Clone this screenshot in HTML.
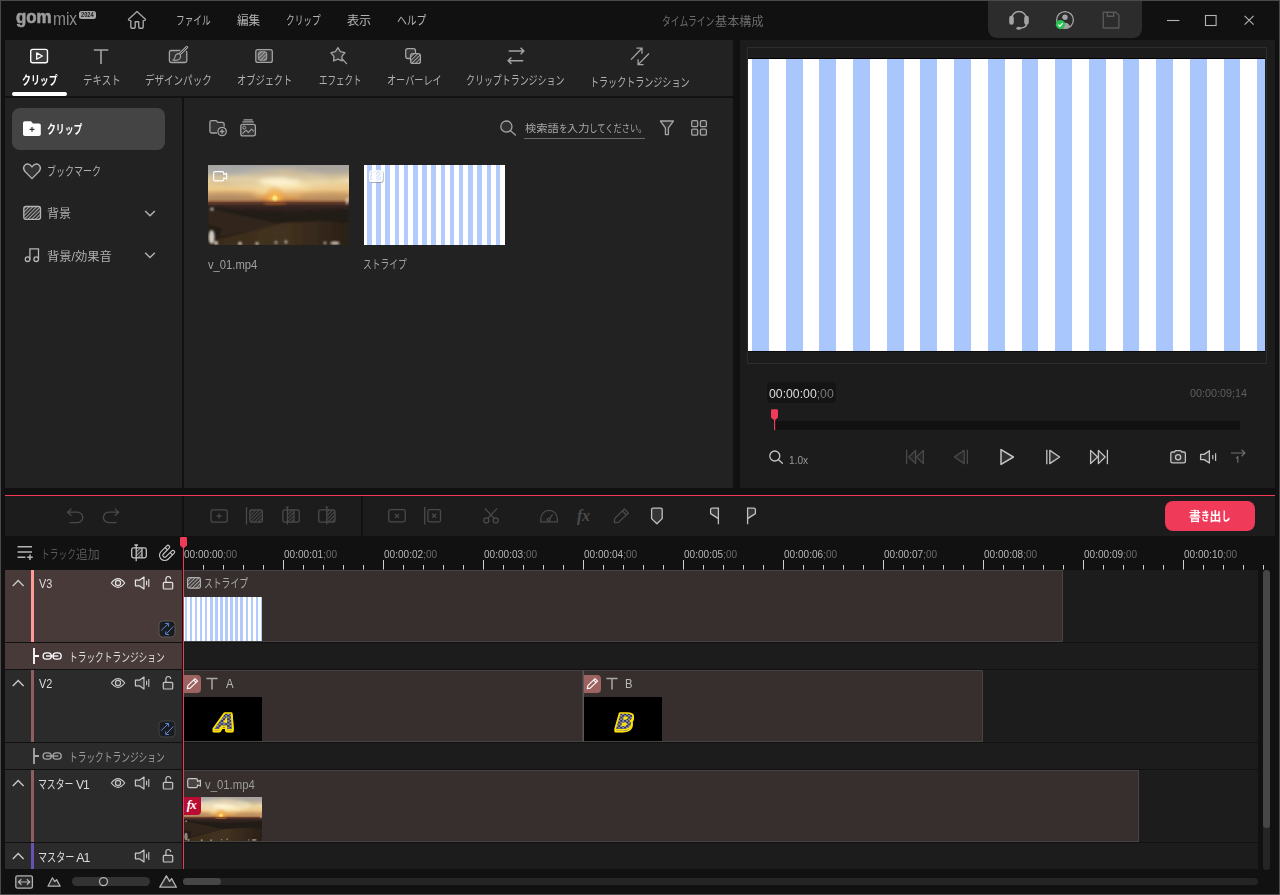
<!DOCTYPE html>
<html lang="ja"><head><meta charset="utf-8"><title>GOM Mix - タイムライン基本構成</title>
<style>html,body{margin:0;padding:0;background:#111111;}
body{width:1280px;height:895px;position:relative;overflow:hidden;font-family:"Liberation Sans","Noto Sans CJK JP",sans-serif;-webkit-font-smoothing:antialiased;}
#app{position:absolute;left:0;top:0;width:1280px;height:895px;box-sizing:border-box;border:1px solid #4a4a4a;background:#111111;overflow:hidden;}
#app>div,#app>span{position:absolute;}
#w{position:absolute;left:-1px;top:-1px;width:1280px;height:895px;}
#w>div,#w>span,#w>svg{position:absolute;}
.t{white-space:nowrap;transform-origin:0 50%;display:block;}
.k{display:inline-block;transform:scaleX(.73);transform-origin:0 50%;white-space:nowrap;}
</style></head><body><div id="app"><div id="w">
<div style="left:5px;top:40px;width:728px;height:56px;background:#222222;"></div>
<div style="left:5px;top:98px;width:177px;height:390px;background:#222222;"></div>
<div style="left:184px;top:98px;width:549px;height:390px;background:#222222;"></div>
<div style="left:740px;top:40px;width:535px;height:448px;background:#1c1c1c;"></div>
<div style="left:988px;top:1px;width:154px;height:37px;background:#2c2c2c;border-radius:0 0 9px 9px;"></div>
<div style="left:12px;top:92px;width:55px;height:4px;background:#ffffff;border-radius:2px;"></div>
<div style="left:12px;top:108px;width:153px;height:42px;background:#444444;border-radius:8px;"></div>
<div style="left:524px;top:138px;width:121px;height:1px;background:#6a6a6a;"></div>
<div style="left:747px;top:47px;width:520px;height:317px;background:transparent;border:1px solid #2d2d2d;box-sizing:border-box;"></div>
<div style="left:748px;top:58px;width:517px;height:1px;background:#000;"></div>
<div style="left:748px;top:351px;width:517px;height:1px;background:#0c0c0c;"></div>
<div style="left:748px;top:59px;width:517px;height:292px;background:#fff repeating-linear-gradient(90deg,#fff 0,#fff 4.1px,#a9c6fd 4.1px,#a9c6fd 20.95px,#fff 20.95px,#fff 33.68px);"></div>
<div style="left:767px;top:382px;width:69px;height:21px;background:#141414;border-radius:4px;"></div>
<div style="left:775px;top:421px;width:465px;height:9px;background:#111111;"></div>
<div style="left:5px;top:495px;width:1270px;height:1px;background:#f03a5a;"></div>
<div style="left:5px;top:496px;width:177px;height:40px;background:#1c1c1c;"></div>
<div style="left:184px;top:496px;width:177px;height:40px;background:#1c1c1c;"></div>
<div style="left:363px;top:496px;width:912px;height:40px;background:#1c1c1c;"></div>
<div style="left:1165px;top:501px;width:90px;height:30px;background:#f03a5a;border-radius:8px;"></div>
<div style="left:5px;top:570px;width:177px;height:72px;background:#483a39;"></div>
<div style="left:184px;top:570px;width:1074px;height:72px;background:#1c1c1c;"></div>
<div style="left:31px;top:570px;width:3px;height:72px;background:#ff9a96;"></div>
<div style="left:5px;top:643px;width:177px;height:26px;background:#483a39;"></div>
<div style="left:184px;top:643px;width:1074px;height:26px;background:#1c1c1c;"></div>
<div style="left:5px;top:670px;width:177px;height:72px;background:#2b2b2b;"></div>
<div style="left:184px;top:670px;width:1074px;height:72px;background:#1c1c1c;"></div>
<div style="left:31px;top:670px;width:3px;height:72px;background:#8e5f5d;"></div>
<div style="left:5px;top:743px;width:177px;height:26px;background:#2b2b2b;"></div>
<div style="left:184px;top:743px;width:1074px;height:26px;background:#1c1c1c;"></div>
<div style="left:5px;top:770px;width:177px;height:72px;background:#2b2b2b;"></div>
<div style="left:184px;top:770px;width:1074px;height:72px;background:#1c1c1c;"></div>
<div style="left:31px;top:770px;width:3px;height:72px;background:#8e5f5d;"></div>
<div style="left:5px;top:843px;width:177px;height:26px;background:#2b2b2b;"></div>
<div style="left:184px;top:843px;width:1074px;height:26px;background:#1c1c1c;"></div>
<div style="left:31px;top:843px;width:3px;height:26px;background:#6a52b5;"></div>
<div style="left:184px;top:570px;width:879px;height:72px;background:#372f2e;box-sizing:border-box;border:1px solid #464343;border-left:none;"></div>
<div style="left:184px;top:670px;width:399px;height:72px;background:#372f2e;box-sizing:border-box;border:1px solid #464343;border-left:none;"></div>
<div style="left:584px;top:670px;width:399px;height:72px;background:#372f2e;box-sizing:border-box;border:1px solid #464343;border-left:none;"></div>
<div style="left:184px;top:770px;width:955px;height:72px;background:#372f2e;box-sizing:border-box;border:1px solid #464343;border-left:none;"></div>
<div style="left:583px;top:670px;width:1px;height:72px;background:#5a5555;"></div>
<div style="left:1263px;top:570px;width:7px;height:300px;background:#252525;border-radius:4px;"></div>
<div style="left:1263px;top:570px;width:7px;height:258px;background:#464646;border-radius:4px;"></div>
<div style="left:183px;top:878px;width:1075px;height:7px;background:#252525;border-radius:4px;"></div>
<div style="left:183px;top:878px;width:38px;height:7px;background:#464646;border-radius:4px;"></div>
<div style="left:72px;top:877px;width:78px;height:9px;background:#333333;border-radius:5px;"></div>
<div style="left:364px;top:165px;width:141px;height:80px;background:#fff repeating-linear-gradient(90deg,#fff 0,#fff 3.1px,#b3cbfc 3.1px,#b3cbfc 7.6px,#fff 7.6px,#fff 9.19px);"></div>
<div style="left:184px;top:597px;width:78px;height:44px;background:#fff repeating-linear-gradient(90deg,#fff 0,#fff 0.6px,#b3cbfc 0.6px,#b3cbfc 3.1px,#fff 3.1px,#fff 5.08px);"></div>
<div style="left:184px;top:697px;width:78px;height:44px;background:#000;"></div>
<div style="left:584px;top:697px;width:78px;height:44px;background:#000;"></div>
<div style="left:184px;top:675px;width:17px;height:18px;background:#9c6360;border-radius:0 4px 4px 0;"></div>
<div style="left:584px;top:675px;width:17px;height:18px;background:#9c6360;border-radius:0 4px 4px 0;"></div>
<svg style="position:absolute;left:208px;top:165px" width="141" height="80" viewBox="0 0 141 80" preserveAspectRatio="none">
<defs>
<linearGradient id="s1sky" x1="0" y1="0" x2="0" y2="1">
<stop offset="0" stop-color="#a4a09c"/><stop offset=".2" stop-color="#c6b89c"/><stop offset=".42" stop-color="#ead6a4"/><stop offset=".64" stop-color="#ecc888"/><stop offset=".84" stop-color="#dca25e"/><stop offset="1" stop-color="#ac7040"/></linearGradient>
<radialGradient id="s1sun" cx=".5" cy=".5" r=".5"><stop offset="0" stop-color="#ffe890"/><stop offset=".25" stop-color="#f8b848" stop-opacity=".95"/><stop offset=".6" stop-color="#f0a040" stop-opacity=".5"/><stop offset="1" stop-color="#e89038" stop-opacity="0"/></radialGradient>
<linearGradient id="s1gr" x1="0" y1="0" x2="0" y2="1">
<stop offset="0" stop-color="#583828"/><stop offset=".1" stop-color="#362521"/><stop offset=".3" stop-color="#241c19"/><stop offset=".6" stop-color="#2c2118"/><stop offset="1" stop-color="#281d13"/></linearGradient>
<linearGradient id="s1dn" x1="0" y1="0" x2="1" y2="0"><stop offset="0" stop-color="#3a2c1e"/><stop offset=".5" stop-color="#433220"/><stop offset="1" stop-color="#2a2017"/></linearGradient>
<filter id="s1b" x="-10%" y="-10%" width="120%" height="120%"><feGaussianBlur stdDeviation="1.3"/></filter>
<filter id="s1b2" x="-20%" y="-20%" width="140%" height="140%"><feGaussianBlur stdDeviation="2.6"/></filter>
<filter id="s1b3" x="-30%" y="-30%" width="160%" height="160%"><feGaussianBlur stdDeviation=".7"/></filter>
<clipPath id="s1c"><rect width="141" height="80"/></clipPath>
</defs>
<g clip-path="url(#s1c)">
<rect width="141" height="38" fill="url(#s1sky)"/>
<g filter="url(#s1b2)">
<ellipse cx="28" cy="5" rx="42" ry="5" fill="#a4a6aa" opacity=".8"/>
<ellipse cx="118" cy="4" rx="34" ry="5" fill="#a8a49c" opacity=".8"/>
<ellipse cx="70" cy="9" rx="30" ry="3" fill="#c6b08a" opacity=".8"/>
<ellipse cx="72" cy="16.5" rx="20" ry="3.4" fill="#fff6d4"/>
<ellipse cx="84" cy="21" rx="18" ry="2.2" fill="#fbe8b0" opacity=".9"/>
<ellipse cx="62" cy="26" rx="16" ry="2.2" fill="#f8e0a0" opacity=".9"/>
<ellipse cx="105" cy="13" rx="28" ry="2.6" fill="#ccb68e" opacity=".7"/>
<ellipse cx="25" cy="17" rx="28" ry="3" fill="#cdb48a" opacity=".7"/>
<ellipse cx="18" cy="33" rx="32" ry="5" fill="#a88868" opacity=".75"/>
<ellipse cx="122" cy="33" rx="32" ry="5" fill="#b08c64" opacity=".7"/>
</g>
<ellipse cx="70" cy="15" rx="52" ry="11" fill="#fff4d8" opacity="0.15" filter="url(#s1b2)"/>
<circle cx="67" cy="33.5" r="13" fill="url(#s1sun)"/>
<ellipse cx="66.8" cy="33.6" rx="2.1" ry="3.2" fill="#ffe680" filter="url(#s1b3)"/>
<rect y="37" width="141" height="43" fill="url(#s1gr)"/>
<g filter="url(#s1b)">
<rect y="36" width="141" height="2.4" fill="#6e402a" opacity=".8"/>
<ellipse cx="67" cy="38.4" rx="12" ry="1.4" fill="#b86428" opacity=".7"/>
<path d="M0 41 L30 45 L80 48 L141 44 V58 L0 58Z" fill="#241b19"/>
<path d="M0 43 L30 50 L72 59 L12 71 L0 69Z" fill="#33271c"/>
<path d="M8 75 L75 58 L112 56 L141 58 V82 H8Z" fill="url(#s1dn)"/>
<path d="M0 60 L14 63 L10 74 L0 72Z" fill="#241a14"/>
</g>
<g fill="#f0ebe2" filter="url(#s1b)" opacity="0.85">
<ellipse cx="3.6" cy="72" rx="3" ry="7"/><circle cx="8" cy="78" r="2"/><circle cx="32" cy="78.5" r="1.8"/><circle cx="49" cy="78.5" r="1.6"/><circle cx="68" cy="77.5" r="1.3"/><circle cx="78" cy="77" r="1.4"/><ellipse cx="127" cy="78" rx="4.5" ry="1.6"/><circle cx="117" cy="78" r="1.3"/><circle cx="4" cy="44" r="1.6"/><ellipse cx="139" cy="36" rx="1" ry="3.5"/><circle cx="139" cy="15" r="1.2"/>
</g>
</g></svg>
<svg style="position:absolute;left:184px;top:797px" width="78" height="44" viewBox="0 0 141 80" preserveAspectRatio="none">
<defs>
<linearGradient id="s2sky" x1="0" y1="0" x2="0" y2="1">
<stop offset="0" stop-color="#a4a09c"/><stop offset=".2" stop-color="#c6b89c"/><stop offset=".42" stop-color="#ead6a4"/><stop offset=".64" stop-color="#ecc888"/><stop offset=".84" stop-color="#dca25e"/><stop offset="1" stop-color="#ac7040"/></linearGradient>
<radialGradient id="s2sun" cx=".5" cy=".5" r=".5"><stop offset="0" stop-color="#ffe890"/><stop offset=".25" stop-color="#f8b848" stop-opacity=".95"/><stop offset=".6" stop-color="#f0a040" stop-opacity=".5"/><stop offset="1" stop-color="#e89038" stop-opacity="0"/></radialGradient>
<linearGradient id="s2gr" x1="0" y1="0" x2="0" y2="1">
<stop offset="0" stop-color="#583828"/><stop offset=".1" stop-color="#362521"/><stop offset=".3" stop-color="#241c19"/><stop offset=".6" stop-color="#2c2118"/><stop offset="1" stop-color="#281d13"/></linearGradient>
<linearGradient id="s2dn" x1="0" y1="0" x2="1" y2="0"><stop offset="0" stop-color="#3a2c1e"/><stop offset=".5" stop-color="#433220"/><stop offset="1" stop-color="#2a2017"/></linearGradient>
<filter id="s2b" x="-10%" y="-10%" width="120%" height="120%"><feGaussianBlur stdDeviation="1.3"/></filter>
<filter id="s2b2" x="-20%" y="-20%" width="140%" height="140%"><feGaussianBlur stdDeviation="2.6"/></filter>
<filter id="s2b3" x="-30%" y="-30%" width="160%" height="160%"><feGaussianBlur stdDeviation=".7"/></filter>
<clipPath id="s2c"><rect width="141" height="80"/></clipPath>
</defs>
<g clip-path="url(#s2c)">
<rect width="141" height="38" fill="url(#s2sky)"/>
<g filter="url(#s2b2)">
<ellipse cx="28" cy="5" rx="42" ry="5" fill="#a4a6aa" opacity=".8"/>
<ellipse cx="118" cy="4" rx="34" ry="5" fill="#a8a49c" opacity=".8"/>
<ellipse cx="70" cy="9" rx="30" ry="3" fill="#c6b08a" opacity=".8"/>
<ellipse cx="72" cy="16.5" rx="20" ry="3.4" fill="#fff6d4"/>
<ellipse cx="84" cy="21" rx="18" ry="2.2" fill="#fbe8b0" opacity=".9"/>
<ellipse cx="62" cy="26" rx="16" ry="2.2" fill="#f8e0a0" opacity=".9"/>
<ellipse cx="105" cy="13" rx="28" ry="2.6" fill="#ccb68e" opacity=".7"/>
<ellipse cx="25" cy="17" rx="28" ry="3" fill="#cdb48a" opacity=".7"/>
<ellipse cx="18" cy="33" rx="32" ry="5" fill="#a88868" opacity=".75"/>
<ellipse cx="122" cy="33" rx="32" ry="5" fill="#b08c64" opacity=".7"/>
</g>
<ellipse cx="70" cy="15" rx="52" ry="11" fill="#fff4d8" opacity="0.45" filter="url(#s2b2)"/>
<circle cx="67" cy="33.5" r="13" fill="url(#s2sun)"/>
<ellipse cx="66.8" cy="33.6" rx="2.1" ry="3.2" fill="#ffe680" filter="url(#s2b3)"/>
<rect y="37" width="141" height="43" fill="url(#s2gr)"/>
<g filter="url(#s2b)">
<rect y="36" width="141" height="2.4" fill="#6e402a" opacity=".8"/>
<ellipse cx="67" cy="38.4" rx="12" ry="1.4" fill="#b86428" opacity=".7"/>
<path d="M0 41 L30 45 L80 48 L141 44 V58 L0 58Z" fill="#241b19"/>
<path d="M0 43 L30 50 L72 59 L12 71 L0 69Z" fill="#33271c"/>
<path d="M8 75 L75 58 L112 56 L141 58 V82 H8Z" fill="url(#s2dn)"/>
<path d="M0 60 L14 63 L10 74 L0 72Z" fill="#241a14"/>
</g>
<g fill="#f0ebe2" filter="url(#s2b)" opacity="0.5">
<ellipse cx="3.6" cy="72" rx="3" ry="7"/><circle cx="8" cy="78" r="2"/><circle cx="32" cy="78.5" r="1.8"/><circle cx="49" cy="78.5" r="1.6"/><circle cx="68" cy="77.5" r="1.3"/><circle cx="78" cy="77" r="1.4"/><ellipse cx="127" cy="78" rx="4.5" ry="1.6"/><circle cx="117" cy="78" r="1.3"/><circle cx="4" cy="44" r="1.6"/><ellipse cx="139" cy="36" rx="1" ry="3.5"/><circle cx="139" cy="15" r="1.2"/>
</g>
</g></svg>
<div style="left:184px;top:797px;width:17px;height:18px;background:#b80c32;border-radius:0 0 4px 0;"></div>
<span class="t" style="left:186.8px;top:796px;font-size:13px;line-height:18px;color:#fff;font-family:'Liberation Serif',serif;font-style:italic;font-weight:700;letter-spacing:-.8px;">fx</span>
<span id="gom" class="t" style="left:16.00px;top:4.70px;font-size:19px;line-height:24px;color:#9c9c9c;font-weight:700;transform:scaleX(0.8876);-webkit-text-stroke:.7px #9c9c9c;">gom</span>
<span id="mix" class="t" style="left:53.00px;top:6.60px;font-size:19px;line-height:24px;color:#8c8c8c;transform:scaleX(0.8154);">mix</span>
<div style="left:79px;top:11px;width:17px;height:8px;background:#a4a4a4;border-radius:2.5px;"></div>
<span id="y2024" class="t" style="left:81.00px;top:10.40px;font-size:7px;line-height:10px;color:#1a1a1a;font-weight:700;transform:scaleX(0.8125);">2024</span>
<span id="m1" class="t" style="left:176.00px;top:12.20px;font-size:12px;line-height:18px;color:#b4b4b4;transform:scaleX(0.7239);">ファイル</span>
<span id="m2" class="t" style="left:237.20px;top:12.20px;font-size:12px;line-height:18px;color:#b4b4b4;transform:scaleX(0.9674);">編集</span>
<span id="m3" class="t" style="left:286.00px;top:12.20px;font-size:12px;line-height:18px;color:#b4b4b4;transform:scaleX(0.7239);">クリップ</span>
<span id="m4" class="t" style="left:347.40px;top:12.20px;font-size:12px;line-height:18px;color:#b4b4b4;transform:scaleX(1.0094);">表示</span>
<span id="m5" class="t" style="left:396.80px;top:12.20px;font-size:12px;line-height:18px;color:#b4b4b4;transform:scaleX(0.8177);">ヘルプ</span>
<span id="title" class="t" style="left:661.75px;top:12.55px;font-size:12px;line-height:18px;color:#6c6c6c;transform:scaleX(1.0101);"><span class="k" style="width:52.56px">タイムライン</span>基本構成</span>
<span id="t1" class="t" style="left:21.50px;top:72.40px;font-size:12px;line-height:18px;color:#ffffff;font-weight:700;transform:scaleX(0.7402);">クリップ</span>
<span id="t2" class="t" style="left:83.00px;top:72.40px;font-size:12px;line-height:18px;color:#b0b0b0;transform:scaleX(0.7895);">テキスト</span>
<span id="t3" class="t" style="left:144.75px;top:72.40px;font-size:12px;line-height:18px;color:#b0b0b0;transform:scaleX(0.7940);">デザインパック</span>
<span id="t4" class="t" style="left:237.00px;top:72.40px;font-size:12px;line-height:18px;color:#b0b0b0;transform:scaleX(0.7681);">オブジェクト</span>
<span id="t5" class="t" style="left:318.50px;top:72.40px;font-size:12px;line-height:18px;color:#b0b0b0;transform:scaleX(0.7072);">エフェクト</span>
<span id="t6" class="t" style="left:386.50px;top:72.40px;font-size:12px;line-height:18px;color:#b0b0b0;transform:scaleX(0.7599);">オーバーレイ</span>
<span id="t7" class="t" style="left:465.75px;top:72.40px;font-size:12px;line-height:18px;color:#b0b0b0;transform:scaleX(0.7454);">クリップトランジション</span>
<span id="t8" class="t" style="left:589.50px;top:73.60px;font-size:12px;line-height:18px;color:#b0b0b0;transform:scaleX(0.7539);">トラックトランジション</span>
<span id="s1" class="t" style="left:47.25px;top:121.25px;font-size:12px;line-height:18px;color:#ffffff;font-weight:700;transform:scaleX(0.7346);">クリップ</span>
<span id="s2" class="t" style="left:46.75px;top:162.75px;font-size:12px;line-height:18px;color:#b0b0b0;transform:scaleX(0.7503);">ブックマーク</span>
<span id="s3" class="t" style="left:47.25px;top:205.25px;font-size:12px;line-height:18px;color:#b0b0b0;transform:scaleX(1.0015);">背景</span>
<span id="s4" class="t" style="left:47.25px;top:247.75px;font-size:12px;line-height:18px;color:#b0b0b0;transform:scaleX(1.0243);">背景/効果音</span>
<span id="search" class="t" style="left:525.25px;top:120.35px;font-size:10.5px;line-height:16px;color:#a8a8a8;transform:scaleX(1.0726);">検索語<span class="k" style="width:7.67px">を</span>入力<span class="k" style="width:53.66px">してください。</span></span>
<span id="f1" class="t" style="left:208.00px;top:256.25px;font-size:12px;line-height:18px;color:#a0a0a0;transform:scaleX(0.9360);">v_01.mp4</span>
<span id="f2" class="t" style="left:363.00px;top:256.38px;font-size:12px;line-height:18px;color:#a0a0a0;transform:scaleX(0.7288);">ストライプ</span>
<span id="tc1" class="t" style="left:769.00px;top:384.20px;font-size:13px;line-height:20px;color:#dddddd;transform:scaleX(0.9427);">00:00:00<span style="color:#7a7a7a">;00</span></span>
<span id="tc2" class="t" style="left:1189.70px;top:385.40px;font-size:11px;line-height:16px;color:#5e5e5e;transform:scaleX(0.9794);">00:00:09;14</span>
<span id="zoomx" class="t" style="left:788.60px;top:451.60px;font-size:11px;line-height:16px;color:#9a9a9a;transform:scaleX(0.9216);">1.0x</span>
<span id="addtrack" class="t" style="left:41.25px;top:545.50px;font-size:12px;line-height:18px;color:#585858;transform:scaleX(0.9948);"><span class="k" style="width:35.04px">トラック</span>追加</span>
<span id="r0" class="t" style="left:184.00px;top:546.40px;font-size:11px;line-height:16px;color:#b8b8b8;transform:scaleX(0.9138);">00:00:00<span style="color:#6a6a6a">;00</span></span>
<span id="r1" class="t" style="left:284.00px;top:546.40px;font-size:11px;line-height:16px;color:#b8b8b8;transform:scaleX(0.9138);">00:00:01<span style="color:#6a6a6a">;00</span></span>
<span id="r2" class="t" style="left:384.00px;top:546.40px;font-size:11px;line-height:16px;color:#b8b8b8;transform:scaleX(0.9138);">00:00:02<span style="color:#6a6a6a">;00</span></span>
<span id="r3" class="t" style="left:484.00px;top:546.40px;font-size:11px;line-height:16px;color:#b8b8b8;transform:scaleX(0.9138);">00:00:03<span style="color:#6a6a6a">;00</span></span>
<span id="r4" class="t" style="left:584.00px;top:546.40px;font-size:11px;line-height:16px;color:#b8b8b8;transform:scaleX(0.9138);">00:00:04<span style="color:#6a6a6a">;00</span></span>
<span id="r5" class="t" style="left:684.00px;top:546.40px;font-size:11px;line-height:16px;color:#b8b8b8;transform:scaleX(0.9138);">00:00:05<span style="color:#6a6a6a">;00</span></span>
<span id="r6" class="t" style="left:784.00px;top:546.40px;font-size:11px;line-height:16px;color:#b8b8b8;transform:scaleX(0.9138);">00:00:06<span style="color:#6a6a6a">;00</span></span>
<span id="r7" class="t" style="left:884.00px;top:546.40px;font-size:11px;line-height:16px;color:#b8b8b8;transform:scaleX(0.9138);">00:00:07<span style="color:#6a6a6a">;00</span></span>
<span id="r8" class="t" style="left:984.00px;top:546.40px;font-size:11px;line-height:16px;color:#b8b8b8;transform:scaleX(0.9138);">00:00:08<span style="color:#6a6a6a">;00</span></span>
<span id="r9" class="t" style="left:1084.00px;top:546.40px;font-size:11px;line-height:16px;color:#b8b8b8;transform:scaleX(0.9138);">00:00:09<span style="color:#6a6a6a">;00</span></span>
<span id="r10" class="t" style="left:1184.00px;top:546.40px;font-size:11px;line-height:16px;color:#b8b8b8;transform:scaleX(0.9138);">00:00:10<span style="color:#6a6a6a">;00</span></span>
<span id="export" class="t" style="left:1188.70px;top:508.00px;font-size:12px;line-height:18px;color:#ffffff;font-weight:700;transform:scaleX(0.9906);">書<span class="k" style="width:8.76px">き</span>出<span class="k" style="width:8.76px">し</span></span>
<span id="v3" class="t" style="left:38.75px;top:574.62px;font-size:12px;line-height:18px;color:#dcdcdc;transform:scaleX(0.9053);">V3</span>
<span id="c_stripe" class="t" style="left:203.75px;top:575.10px;font-size:12px;line-height:18px;color:#a8a8a8;transform:scaleX(0.7339);">ストライプ</span>
<span id="tt1" class="t" style="left:69.10px;top:648.85px;font-size:12px;line-height:18px;color:#dcdcdc;transform:scaleX(0.7252);">トラックトランジション</span>
<span id="v2" class="t" style="left:38.75px;top:674.62px;font-size:12px;line-height:18px;color:#dcdcdc;transform:scaleX(0.9053);">V2</span>
<span id="cA" class="t" style="left:226.00px;top:674.80px;font-size:12px;line-height:18px;color:#b8b8b8;transform:scaleX(0.9446);">A</span>
<span id="cB" class="t" style="left:624.75px;top:674.80px;font-size:12px;line-height:18px;color:#b8b8b8;transform:scaleX(0.9386);">B</span>
<span id="tt2" class="t" style="left:69.10px;top:748.85px;font-size:12px;line-height:18px;color:#9a9a9a;transform:scaleX(0.7252);">トラックトランジション</span>
<span id="v1" class="t" style="left:38.40px;top:775.90px;font-size:12px;line-height:18px;color:#dcdcdc;transform:scaleX(1.0121);"><span class="k" style="width:35.04px">マスター</span><span style="letter-spacing:-.9px"> V1</span></span>
<span id="c_v01" class="t" style="left:204.50px;top:776.20px;font-size:12px;line-height:18px;color:#9a9a9a;transform:scaleX(0.9436);">v_01.mp4</span>
<span id="a1" class="t" style="left:38.40px;top:848.90px;font-size:12px;line-height:18px;color:#dcdcdc;transform:scaleX(1.0365);"><span class="k" style="width:35.04px">マスター</span><span style="letter-spacing:-.9px"> A1</span></span>
<span class="t" style="left:577px;top:505.5px;font-size:16px;line-height:20px;color:#4a4a4a;font-family:'Liberation Serif',serif;font-style:italic;font-weight:700;letter-spacing:-.3px;">fx</span>
<div style="left:183px;top:546px;width:1.3px;height:323px;background:#f03a5a;z-index:5"></div>
<svg width="1280" height="895" viewBox="0 0 1280 895" style="left:0;top:0;pointer-events:none">
<defs><pattern id="hG" width="2.6" height="2.6" patternUnits="userSpaceOnUse" patternTransform="rotate(-45)"><rect width="2.6" height="1.1" fill="#a4a4a4"/></pattern><pattern id="hD" width="2.6" height="2.6" patternUnits="userSpaceOnUse" patternTransform="rotate(-45)"><rect width="2.6" height="1.1" fill="#4a4a4a"/></pattern><pattern id="hW" width="2.6" height="2.6" patternUnits="userSpaceOnUse" patternTransform="rotate(-45)"><rect width="2.6" height="1.1" fill="#ffffff"/></pattern><pattern id="chk" width="3.4" height="3.4" patternUnits="userSpaceOnUse"><rect width="3.4" height="3.4" fill="#8e94b8"/><rect width="1.7" height="1.7" fill="#2e3044"/><rect x="1.7" y="1.7" width="1.7" height="1.7" fill="#2e3044"/></pattern><filter id="ext" x="-20%" y="-20%" width="140%" height="150%"><feOffset dy="1.5" result="o"/><feMerge><feMergeNode in="o"/><feMergeNode in="SourceGraphic"/></feMerge></filter></defs>
<path d="M137 11.6 L128.6 19.2 Q128 20.6 130.8 20.6 L130.8 26.4 Q130.8 28.3 132.7 28.3 L133.4 28.3 Q135.2 28.3 135.2 26.4 L135.2 21.8 L138.7 21.8 L138.7 26.4 Q138.7 28.3 140.5 28.3 L141.3 28.3 Q143.2 28.3 143.2 26.4 L143.2 20.6 Q146 20.6 145.4 19.2 Z" fill="none" stroke="#a4a4a4" stroke-width="1.4" stroke-linejoin="round"/>
<g fill="none" stroke="#a4a4a4" stroke-width="1.5"><path d="M1011.5 19 A7.5 7.5 0 0 1 1026.5 19"/><path d="M1026.6 23.5 Q1026.6 27.6 1020.5 28.1"/></g>
<rect x="1009.2" y="15.8" width="4.6" height="9" rx="2.2" fill="#a4a4a4"/><rect x="1024.2" y="15.8" width="4.6" height="9" rx="2.2" fill="#a4a4a4"/><ellipse cx="1018.8" cy="28.2" rx="2.4" ry="1.5" fill="#a4a4a4"/>
<circle cx="1065" cy="20" r="8.4" fill="none" stroke="#a4a4a4" stroke-width="1.3"/><circle cx="1065" cy="17.2" r="2.7" fill="#a4a4a4"/><path d="M1060 26.8 A5.2 5.6 0 0 1 1070 26.8 A8.4 8.4 0 0 1 1060 26.8Z" fill="#a4a4a4"/>
<circle cx="1060.4" cy="24.6" r="4.6" fill="#24c250"/><path d="M1058.2 24.6 l1.7 1.7 l2.8 -3.2" fill="none" stroke="#fff" stroke-width="1.3"/>
<path d="M1103.3 12.2 h12.6 l3 3 v12.8 h-15.6 z" fill="none" stroke="#585858" stroke-width="1.4" stroke-linejoin="round"/><path d="M1107.3 12.2 v4 h6.4 v-4" fill="none" stroke="#585858" stroke-width="1.4"/>
<g stroke="#b4b4b4" stroke-width="1.1" fill="none"><path d="M1167 20.5 h12.4"/><rect x="1205.5" y="15.5" width="10.6" height="10"/><path d="M1244.6 15.8 l9 8.8 M1253.6 15.8 l-9 8.8"/></g>
<rect x="30.7" y="49.4" width="16.8" height="13.3" rx="2" fill="#3e3e3e" stroke="#ffffff" stroke-width="1.4"/><path d="M36.7 52.9 L42.4 56 L36.7 59.2 Z" fill="none" stroke="#fff" stroke-width="1.3" stroke-linejoin="round"/>
<path d="M93.8 50 H108.3 M101 50 V64" fill="none" stroke="#a4a4a4" stroke-width="1.6"/>
<rect x="169.4" y="50.5" width="17.4" height="12" rx="1.8" fill="#343434" stroke="#a4a4a4" stroke-width="1.3"/>
<path d="M186.8 47.2 L179.6 54.4" stroke="#222" stroke-width="4.6"/><path d="M186.8 47.2 L180.4 53.6" stroke="#a4a4a4" stroke-width="2.8" stroke-linecap="round"/><path d="M186.8 47.2 L180.4 53.6" stroke="#303030" stroke-width="0.9" stroke-linecap="round"/><path d="M179.2 53.4 Q181.8 56.2 179.6 58.8 Q177.2 61.2 172.8 60 Q174.8 59.2 175 57.2 Q175.2 54 179.2 53.4Z" fill="#343434" stroke="#a4a4a4" stroke-width="1.1" stroke-linejoin="round"/>
<rect x="255.8" y="49.6" width="16.5" height="12.8" rx="2" fill="#343434" stroke="#a4a4a4" stroke-width="1.3"/><rect x="258.3" y="51.8" width="8.4" height="8.4" rx="1.6" fill="#555"/><rect x="258.3" y="51.8" width="8.4" height="8.4" rx="1.6" fill="url(#hG)" stroke="#a4a4a4" stroke-width="1"/>
<polygon points="337.90,47.70 340.37,51.60 344.84,52.74 341.89,56.30 342.19,60.91 337.90,59.20 333.61,60.91 333.91,56.30 330.96,52.74 335.43,51.60" fill="#343434" stroke="#a4a4a4" stroke-width="1.3" stroke-linejoin="round"/><path d="M342.4 59.3 L346.6 63.6" stroke="#a4a4a4" stroke-width="1.3" stroke-linecap="round"/>
<rect x="405.7" y="48.7" width="9.8" height="9.8" rx="2.2" fill="#343434" stroke="#a4a4a4" stroke-width="1.3"/><rect x="410.6" y="53.6" width="9.8" height="9.8" rx="2.2" fill="#222"/><rect x="410.6" y="53.6" width="9.8" height="9.8" rx="2.2" fill="url(#hG)" stroke="#a4a4a4" stroke-width="1.3"/>
<g fill="none" stroke="#a4a4a4" stroke-width="1.5"><path d="M508.7 51 H523.6 M520.6 47.8 L523.8 51 L520.6 54.2"/><path d="M523.2 60.7 H508.4 M511.4 57.5 L508.2 60.7 L511.4 63.9"/></g>
<g fill="none" stroke="#a4a4a4" stroke-width="1.3"><path d="M631 59.6 L641.7 48.5 M636.5 48.2 H642 V53.7"/><path d="M649 53.5 L638.4 64.4 M643.6 64.7 H638.1 V59.2"/></g>
<path d="M23 123 Q23 121.2 24.8 121.2 H30.2 Q31.4 121.2 32 122.2 L32.8 123.4 H39 Q40.8 123.4 40.8 125.2 V134.2 Q40.8 136 39 136 H24.8 Q23 136 23 134.2 Z" fill="#ffffff"/><path d="M29.6 129.3 H34.4 M32 126.9 V131.7" stroke="#333" stroke-width="1.2"/>
<path d="M32 178.6 L24.6 171 Q22.6 168.2 24.4 165.6 Q26.4 163.2 29.2 164.4 Q30.9 165.2 32 167 Q33.1 165.2 34.8 164.4 Q37.6 163.2 39.6 165.6 Q41.4 168.2 39.4 171 Z" fill="#333" stroke="#b4b4b4" stroke-width="1.3" stroke-linejoin="round"/>
<rect x="23.8" y="206.5" width="16.7" height="12.8" rx="2" fill="url(#hG)" stroke="#b4b4b4" stroke-width="1.3"/>
<g fill="none" stroke="#b4b4b4" stroke-width="1.3"><circle cx="27.6" cy="259.2" r="2.3"/><circle cx="36.2" cy="259.2" r="2.3"/><path d="M29.9 259.2 V248.8 H38.5 V259.2"/></g>
<g fill="none" stroke="#b4b4b4" stroke-width="1.4"><path d="M145.2 211 L150 215.8 L154.8 211"/><path d="M145.2 252.8 L150 257.6 L154.8 252.8"/></g>
<path d="M209.9 122.4 Q209.9 120.7 211.6 120.7 H215.6 Q216.6 120.7 217.2 121.6 L217.8 122.3 H222.4 Q224.1 122.3 224.1 124 V131.3 Q224.1 133 222.4 133 H211.6 Q209.9 133 209.9 131.3 Z" fill="#343434" stroke="#a4a4a4" stroke-width="1.3"/>
<circle cx="222.1" cy="131.5" r="5.4" fill="#222"/><circle cx="222.1" cy="131.5" r="4.2" fill="#2c2c2c" stroke="#a4a4a4" stroke-width="1.3"/><path d="M219.9 131.5 H224.3 M222.1 129.3 V133.7" stroke="#a4a4a4" stroke-width="1.3"/>
<rect x="240.8" y="124.3" width="14.6" height="11.6" rx="2" fill="#343434" stroke="#a4a4a4" stroke-width="1.3"/><path d="M242.4 121.9 H253.8 M243.6 119.9 H252.6" stroke="#a4a4a4" stroke-width="1.4"/><circle cx="244.2" cy="127.6" r="1.5" fill="none" stroke="#a4a4a4" stroke-width="1"/><path d="M242.4 133.6 L246 130.2 L248.3 132.4 L251.6 129.2 L253.8 131.4" fill="none" stroke="#a4a4a4" stroke-width="1.1"/>
<circle cx="506.4" cy="126.6" r="5.6" fill="#303030" stroke="#a4a4a4" stroke-width="1.3"/><path d="M510.5 130.8 L515.4 135" stroke="#a4a4a4" stroke-width="1.3" stroke-linecap="round"/>
<path d="M660.4 121 H673.4 L668.4 127.8 V134.6 H665.4 V127.8 Z" fill="#303030" stroke="#a4a4a4" stroke-width="1.3" stroke-linejoin="round"/>
<g fill="#303030" stroke="#a4a4a4" stroke-width="1.3"><rect x="691.7" y="120.7" width="6" height="6" rx="1.3"/><rect x="700.4" y="120.7" width="6" height="6" rx="1.3"/><rect x="691.7" y="129.2" width="6" height="6" rx="1.3"/><rect x="700.4" y="129.2" width="6" height="6" rx="1.3"/></g>
<path d="M213.6 173.2 Q213.6 171.6 215.2 171.6 H222.2 Q223.8 171.6 223.8 173.2 V174.4 L226.6 173.4 V179 L223.8 178 V179.2 Q223.8 180.8 222.2 180.8 H215.2 Q213.6 180.8 213.6 179.2 Z" fill="none" stroke="#fff" stroke-width="1.2"/>
<rect x="370.6" y="171.6" width="12.4" height="10.6" rx="2" fill="none" stroke="#70707c" stroke-width="1.4" opacity=".55"/><rect x="369.8" y="170.8" width="12.4" height="10.6" rx="2" fill="#ffffff" opacity=".45"/><rect x="369.8" y="170.8" width="12.4" height="10.6" rx="2" fill="url(#hW)" stroke="#fff" stroke-width="1.2"/>
<text transform="translate(223.0,728.5) scale(1.27,1)" x="0" y="0" text-anchor="middle" font-family="'Noto Sans CJK JP',sans-serif" font-weight="900" font-style="italic" font-size="20.5" fill="url(#chk)" stroke="#ffe100" stroke-width="3" stroke-linejoin="round" paint-order="stroke" filter="url(#ext)">A</text>
<text transform="translate(622.2,728.6) scale(1.16,1)" x="0" y="0" text-anchor="middle" font-family="'Noto Sans CJK JP',sans-serif" font-weight="900" font-style="italic" font-size="20.5" fill="url(#chk)" stroke="#ffe100" stroke-width="3" stroke-linejoin="round" paint-order="stroke" filter="url(#ext)">B</text>
<path d="M771 410.4 Q771 409.2 772.2 409.2 H776.8 Q778 409.2 778 410.4 V417.6 L774.5 420.6 L771 417.6 Z" fill="#f03a5a"/><rect x="774" y="419" width="1.2" height="11.2" fill="#f03a5a"/>
<circle cx="774.8" cy="456" r="5" fill="none" stroke="#c4c4c4" stroke-width="1.3"/><path d="M778.5 459.8 L782.4 463.3" stroke="#c4c4c4" stroke-width="1.3" stroke-linecap="round"/>
<path d="M906.6 449.8 V464.2" stroke="#4a4a4a" stroke-width="1.3"/><path d="M915.6 450.4 L908.8 457.0 L915.6 463.6 Z" fill="#262626" stroke="#4a4a4a" stroke-width="1.3" stroke-linejoin="round"/><path d="M923.4 450.4 L916.4 457.0 L923.4 463.6 Z" fill="#262626" stroke="#4a4a4a" stroke-width="1.3" stroke-linejoin="round"/>
<path d="M964.2 450.4 L954.4 457.0 L964.2 463.6 Z" fill="#262626" stroke="#4a4a4a" stroke-width="1.3" stroke-linejoin="round"/><path d="M967.4 449.8 V464.2" stroke="#4a4a4a" stroke-width="1.3"/>
<path d="M1001 449.6 L1013.4 457.0 L1001 464.4 Z" fill="#303030" stroke="#c4c4c4" stroke-width="1.5" stroke-linejoin="round"/>
<path d="M1046.8 449.8 V464.2" stroke="#c4c4c4" stroke-width="1.3"/><path d="M1049.8 450.4 L1059.6 457.0 L1049.8 463.6 Z" fill="#303030" stroke="#c4c4c4" stroke-width="1.3" stroke-linejoin="round"/>
<path d="M1090.6 450.4 L1097.6 457.0 L1090.6 463.6 Z" fill="#303030" stroke="#c4c4c4" stroke-width="1.3" stroke-linejoin="round"/><path d="M1098.4 450.4 L1105.2 457.0 L1098.4 463.6 Z" fill="#303030" stroke="#c4c4c4" stroke-width="1.3" stroke-linejoin="round"/><path d="M1107.4 449.8 V464.2" stroke="#c4c4c4" stroke-width="1.3"/>
<path d="M1170.8 453.6 Q1170.8 452 1172.4 452 H1174.4 L1175.6 450.6 H1180.6 L1181.8 452 H1183.8 Q1185.4 452 1185.4 453.6 V461.2 Q1185.4 462.8 1183.8 462.8 H1172.4 Q1170.8 462.8 1170.8 461.2 Z" fill="#303030" stroke="#c4c4c4" stroke-width="1.3"/><circle cx="1178.1" cy="457.3" r="2.6" fill="none" stroke="#c4c4c4" stroke-width="1.3"/>
<path d="M1200.6 454.4 H1204.2 L1209.4 450.8 V463 L1204.2 459.6 H1200.6 Z" fill="#303030" stroke="#c4c4c4" stroke-width="1.3" stroke-linejoin="round"/><path d="M1212.8 455 V459.2 M1215.6 453.2 V461" stroke="#c4c4c4" stroke-width="1.2"/>
<path d="M1231 453 H1244.8 M1241.6 449.8 L1244.9 453 L1241.6 456.2" fill="none" stroke="#6e6e6e" stroke-width="1.2"/><path d="M1236 458.4 L1237.8 456.8 V462.8" fill="none" stroke="#6e6e6e" stroke-width="1.2"/>
<g fill="none" stroke="#4a4a4a" stroke-width="1.3"><path d="M71.4 508.6 L67.6 512.2 L71.4 515.8 M67.8 512.2 H77.6 A5.2 5.2 0 0 1 77.6 522.6 H69.6"/><path d="M114.8 508.6 L118.6 512.2 L114.8 515.8 M118.4 512.2 H108.6 A5.2 5.2 0 0 0 108.6 522.6 H116.6"/></g>
<g fill="none" stroke="#4a4a4a" stroke-width="1.3"><rect x="211" y="509.8" width="16.2" height="12.4" rx="1.8"/><path d="M216.6 516 H221.6 M219.1 513.5 V518.5"/></g>
<path d="M246.5 507 V524.6" stroke="#4a4a4a" stroke-width="1.3"/><rect x="249.8" y="509.8" width="12.6" height="12.4" rx="1.6" fill="url(#hD)" stroke="#4a4a4a" stroke-width="1.2"/>
<rect x="287.4" y="510" width="6.6" height="12" fill="url(#hD)"/><rect x="282.9" y="509.8" width="16.3" height="12.4" rx="1.8" fill="none" stroke="#4a4a4a" stroke-width="1.3"/><path d="M287.4 507 V524.6 M294 510 V522" stroke="#4a4a4a" stroke-width="1.2"/><path d="M285.6 506.4 H289.2 L287.4 508.4Z" fill="#4a4a4a"/>
<rect x="326.8" y="510" width="8.2" height="12" fill="url(#hD)"/><rect x="318.7" y="509.8" width="16.3" height="12.4" rx="1.8" fill="none" stroke="#4a4a4a" stroke-width="1.3"/><path d="M326.8 507 V524.6" stroke="#4a4a4a" stroke-width="1.2"/><path d="M325 506.4 H328.6 L326.8 508.4Z" fill="#4a4a4a"/>
<g fill="none" stroke="#4a4a4a" stroke-width="1.3"><rect x="388.7" y="509.7" width="16.5" height="12.2" rx="1.8"/><path d="M395 513.9 L399 517.9 M399 513.9 L395 517.9"/></g>
<g fill="none" stroke="#4a4a4a" stroke-width="1.3"><path d="M424.7 507 V524.6"/><rect x="427.9" y="509.7" width="12.6" height="12.2" rx="1.6"/><path d="M432.2 513.8 L436.2 517.8 M436.2 513.8 L432.2 517.8"/></g>
<g fill="none" stroke="#4a4a4a" stroke-width="1.3"><circle cx="486.3" cy="520.4" r="2.5"/><circle cx="495.7" cy="520.4" r="2.5"/><path d="M484.8 508.4 L494.2 518.4 M497.2 508.4 L487.8 518.4"/></g>
<g fill="none" stroke="#4a4a4a" stroke-width="1.3"><path d="M540.8 521.8 V519 A8.3 8.6 0 0 1 557.4 519 V521.8 Z"/><circle cx="548.6" cy="519.8" r="1.4"/><path d="M549.6 518.6 L552.6 514.4"/></g>
<g fill="none" stroke="#4a4a4a" stroke-width="1.3" stroke-linejoin="round"><path d="M624.4 509 L628.4 513 L618.4 522.4 L614.4 522.6 L614.6 518.6 Z"/><path d="M622.4 511 L626.4 515"/></g>
<path d="M651.6 509.6 Q651.6 508.2 653 508.2 H660.8 Q662.2 508.2 662.2 509.6 V518.6 L656.9 523.8 L651.6 518.6 Z" fill="#363636" stroke="#c0c0c0" stroke-width="1.3" stroke-linejoin="round"/>
<path d="M718.4 508.2 H712 Q710.6 508.2 710.6 509.6 V513.6 L718.4 518.6" fill="#363636" stroke="#c0c0c0" stroke-width="1.3" stroke-linejoin="round"/><path d="M718.4 507.6 V524.2" stroke="#c0c0c0" stroke-width="1.3"/>
<path d="M747.6 508.2 H754 Q755.4 508.2 755.4 509.6 V513.6 L747.6 518.6" fill="#363636" stroke="#c0c0c0" stroke-width="1.3" stroke-linejoin="round"/><path d="M747.6 507.6 V524.2" stroke="#c0c0c0" stroke-width="1.3"/>
<path d="M17.6 546.7 H32 M17.6 552 H32 M17.6 557.3 H25.4 M27.2 557.3 H32.8 M30 554.5 V560.1" fill="none" stroke="#b4b4b4" stroke-width="1.5"/>
<rect x="136.2" y="548" width="5.8" height="10" fill="url(#hG)"/><rect x="131.7" y="547.9" width="14.6" height="10" rx="1.8" fill="none" stroke="#c4c4c4" stroke-width="1.3"/><path d="M136.2 545 V561.2 M142 548 V558 M134.4 545 H138" stroke="#c4c4c4" stroke-width="1.3"/>
<g transform="translate(164.7,555.3) rotate(45)" fill="none" stroke="#c4c4c4" stroke-width="1.2"><path d="M-5.2 -8.2 V0 A5.2 5.2 0 0 0 5.2 0 V-8.2 A1.65 1.65 0 0 0 1.9 -8.2 V0 A1.9 1.9 0 0 1 -1.9 0 V-8.2 A1.65 1.65 0 0 0 -5.2 -8.2 Z"/><path d="M-5.2 -5.8 H-1.9 M1.9 -5.8 H5.2"/></g>
<path d="M180 538.2 Q180 537 181.2 537 H185.8 Q187 537 187 538.2 V545.4 L183.5 548.4 L180 545.4 Z" fill="#f03a5a"/>
<path d="M183.5 560 V569.5 M203.5 565 V569.5 M223.5 565 V569.5 M243.5 565 V569.5 M263.5 565 V569.5 M283.5 560 V569.5 M303.5 565 V569.5 M323.5 565 V569.5 M343.5 565 V569.5 M363.5 565 V569.5 M383.5 560 V569.5 M403.5 565 V569.5 M423.5 565 V569.5 M443.5 565 V569.5 M463.5 565 V569.5 M483.5 560 V569.5 M503.5 565 V569.5 M523.5 565 V569.5 M543.5 565 V569.5 M563.5 565 V569.5 M583.5 560 V569.5 M603.5 565 V569.5 M623.5 565 V569.5 M643.5 565 V569.5 M663.5 565 V569.5 M683.5 560 V569.5 M703.5 565 V569.5 M723.5 565 V569.5 M743.5 565 V569.5 M763.5 565 V569.5 M783.5 560 V569.5 M803.5 565 V569.5 M823.5 565 V569.5 M843.5 565 V569.5 M863.5 565 V569.5 M883.5 560 V569.5 M903.5 565 V569.5 M923.5 565 V569.5 M943.5 565 V569.5 M963.5 565 V569.5 M983.5 560 V569.5 M1003.5 565 V569.5 M1023.5 565 V569.5 M1043.5 565 V569.5 M1063.5 565 V569.5 M1083.5 560 V569.5 M1103.5 565 V569.5 M1123.5 565 V569.5 M1143.5 565 V569.5 M1163.5 565 V569.5 M1183.5 560 V569.5 M1203.5 565 V569.5 M1223.5 565 V569.5 M1243.5 565 V569.5 M1263.5 565 V569.5" stroke="#d0d0d0" stroke-width="1" fill="none"/>
<path d="M12.8 586 L18.2 580.4 L23.6 586" fill="none" stroke="#c8c8c8" stroke-width="1.4"/>
<path d="M111.4 583 Q118 574.2 124.7 583 Q118 591.8 111.4 583 Z" fill="none" stroke="#e6e6e6" stroke-width="1.2"/><circle cx="118" cy="583" r="2.6" fill="#574a49" stroke="#e6e6e6" stroke-width="1.2"/>
<path d="M135.4 580.2 H139.4 L144 577 V589 L139.4 585.8 H135.4 Z" fill="#574a49" stroke="#e6e6e6" stroke-width="1.2" stroke-linejoin="round"/><path d="M146.6 580.8 V585.2 M148.8 579 V587" stroke="#e6e6e6" stroke-width="1.1"/>
<rect x="163.3" y="582.3" width="9.4" height="6.7" rx="1" fill="#574a49" stroke="#e6e6e6" stroke-width="1.2"/><path d="M165.9 582.3 V579.2 A2.4 2.6 0 0 1 170.7 579" fill="none" stroke="#e6e6e6" stroke-width="1.2"/>
<path d="M12.8 686 L18.2 680.4 L23.6 686" fill="none" stroke="#c8c8c8" stroke-width="1.4"/>
<path d="M111.4 683 Q118 674.2 124.7 683 Q118 691.8 111.4 683 Z" fill="none" stroke="#c6c6c6" stroke-width="1.2"/><circle cx="118" cy="683" r="2.6" fill="#3a3a3a" stroke="#c6c6c6" stroke-width="1.2"/>
<path d="M135.4 680.2 H139.4 L144 677 V689 L139.4 685.8 H135.4 Z" fill="#3a3a3a" stroke="#c6c6c6" stroke-width="1.2" stroke-linejoin="round"/><path d="M146.6 680.8 V685.2 M148.8 679 V687" stroke="#c6c6c6" stroke-width="1.1"/>
<rect x="163.3" y="682.3" width="9.4" height="6.7" rx="1" fill="#3a3a3a" stroke="#c6c6c6" stroke-width="1.2"/><path d="M165.9 682.3 V679.2 A2.4 2.6 0 0 1 170.7 679" fill="none" stroke="#c6c6c6" stroke-width="1.2"/>
<path d="M12.8 786 L18.2 780.4 L23.6 786" fill="none" stroke="#c8c8c8" stroke-width="1.4"/>
<path d="M111.4 783 Q118 774.2 124.7 783 Q118 791.8 111.4 783 Z" fill="none" stroke="#c6c6c6" stroke-width="1.2"/><circle cx="118" cy="783" r="2.6" fill="#3a3a3a" stroke="#c6c6c6" stroke-width="1.2"/>
<path d="M135.4 780.2 H139.4 L144 777 V789 L139.4 785.8 H135.4 Z" fill="#3a3a3a" stroke="#c6c6c6" stroke-width="1.2" stroke-linejoin="round"/><path d="M146.6 780.8 V785.2 M148.8 779 V787" stroke="#c6c6c6" stroke-width="1.1"/>
<rect x="163.3" y="782.3" width="9.4" height="6.7" rx="1" fill="#3a3a3a" stroke="#c6c6c6" stroke-width="1.2"/><path d="M165.9 782.3 V779.2 A2.4 2.6 0 0 1 170.7 779" fill="none" stroke="#c6c6c6" stroke-width="1.2"/>
<path d="M12.8 859 L18.2 853.4 L23.6 859" fill="none" stroke="#c8c8c8" stroke-width="1.4"/>
<path d="M135.4 853.2 H139.4 L144 850 V862 L139.4 858.8 H135.4 Z" fill="#3a3a3a" stroke="#c6c6c6" stroke-width="1.2" stroke-linejoin="round"/><path d="M146.6 853.8 V858.2 M148.8 852 V860" stroke="#c6c6c6" stroke-width="1.1"/>
<rect x="163.3" y="855.3" width="9.4" height="6.7" rx="1" fill="#3a3a3a" stroke="#c6c6c6" stroke-width="1.2"/><path d="M165.9 855.3 V852.2 A2.4 2.6 0 0 1 170.7 852" fill="none" stroke="#c6c6c6" stroke-width="1.2"/>
<rect x="159" y="621" width="16" height="16" rx="3.6" fill="#1b1c20" stroke="#5c5757" stroke-width="1"/>
<g fill="none" stroke="#5a84d4" stroke-width="1"><path d="M161.1 630.6 L168.3 623.8 M165.2 623.5 H168.6 V626.7"/><path d="M173.4 626.4 L166.2 634 M165.7 631.4 V634.5 H168.9"/></g>
<rect x="159" y="721" width="16" height="16" rx="3.6" fill="#1b1c20" stroke="#444444" stroke-width="1"/>
<g fill="none" stroke="#5a84d4" stroke-width="1"><path d="M161.1 730.6 L168.3 723.8 M165.2 723.5 H168.6 V726.7"/><path d="M173.4 726.4 L166.2 734 M165.7 731.4 V734.5 H168.9"/></g>
<path d="M34 648 V664 M34 656 H39" stroke="#ffffff" stroke-width="1.8" fill="none"/><g fill="none" stroke="#ffffff" stroke-width="1.3"><rect x="43.1" y="652.8" width="8.2" height="6.4" rx="3.2"/><rect x="53" y="652.8" width="8.2" height="6.4" rx="3.2"/><path d="M46 656 H58.4"/></g>
<path d="M34 748 V764 M34 756 H39" stroke="#a8a8a8" stroke-width="1.8" fill="none"/><g fill="none" stroke="#a8a8a8" stroke-width="1.3"><rect x="43.1" y="752.8" width="8.2" height="6.4" rx="3.2"/><rect x="53" y="752.8" width="8.2" height="6.4" rx="3.2"/><path d="M46 756 H58.4"/></g>
<rect x="187.6" y="577.6" width="12.8" height="10.6" rx="1.8" fill="url(#hG)" stroke="#b0b0b0" stroke-width="1.2"/>
<g fill="none" stroke="#fff" stroke-width="1.2" stroke-linejoin="round" transform="translate(186.4,678.2) scale(.9)"><path d="M9.6 0.4 L12.4 3.2 L4.2 11 L1 11.6 L1.6 8.2 Z"/><path d="M8 2 L10.8 4.8"/></g>
<g fill="none" stroke="#fff" stroke-width="1.2" stroke-linejoin="round" transform="translate(586.4,678.2) scale(.9)"><path d="M9.6 0.4 L12.4 3.2 L4.2 11 L1 11.6 L1.6 8.2 Z"/><path d="M8 2 L10.8 4.8"/></g>
<path d="M206.4 678.4 H217.6 M212 678.4 V689.6" stroke="#a8a8a8" stroke-width="1.5" fill="none"/><path d="M606.4 678.4 H617.6 M612 678.4 V689.6" stroke="#a8a8a8" stroke-width="1.5" fill="none"/>
<path d="M187.7 780.2 Q187.7 778.6 189.3 778.6 H195.9 Q197.5 778.6 197.5 780.2 V781.4 L200.4 780.4 V786 L197.5 785 V786 Q197.5 787.6 195.9 787.6 H189.3 Q187.7 787.6 187.7 786 Z" fill="#4a4444" stroke="#c8c8c8" stroke-width="1.2"/>
<rect x="15.8" y="875.8" width="16.6" height="12.4" rx="1.6" fill="#2a2a2a" stroke="#b4b4b4" stroke-width="1.3"/><path d="M18.6 882 H29.6 M21.4 879.2 L18.4 882 L21.4 884.8 M26.8 879.2 L29.8 882 L26.8 884.8" fill="none" stroke="#b4b4b4" stroke-width="1.2"/>
<path d="M48 886.2 L52.4 877.8 L54.8 881.6 L56.6 879.6 L60.2 886.2 Z" fill="#2a2a2a" stroke="#b4b4b4" stroke-width="1.2" stroke-linejoin="round"/>
<circle cx="103.5" cy="881.6" r="4" fill="#2a2a2a" stroke="#b4b4b4" stroke-width="1.3"/>
<path d="M159.8 887.2 L166.4 875.8 L169.6 881.4 L171.6 878.6 L176.4 887.2 Z" fill="#2a2a2a" stroke="#b4b4b4" stroke-width="1.3" stroke-linejoin="round"/>
</svg>
</div></div></body></html>
